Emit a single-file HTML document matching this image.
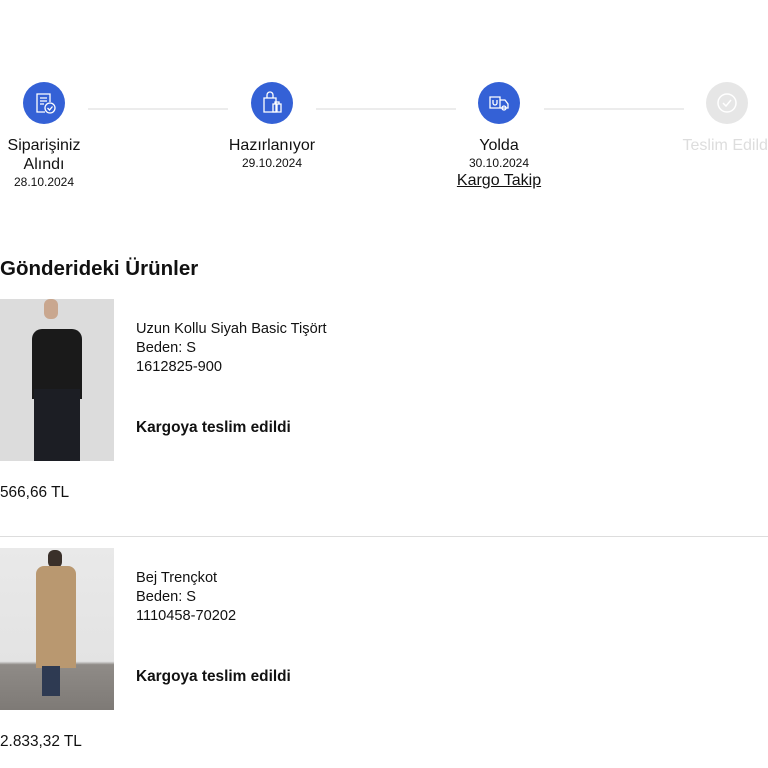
<!DOCTYPE html>
<html><head><meta charset="utf-8"><style>
*{margin:0;padding:0;box-sizing:border-box}
body{width:768px;height:768px;overflow:hidden;background:#fff;font-family:"Liberation Sans",sans-serif;color:#111;position:relative}
.a{position:absolute}
.c{position:absolute;width:42px;height:42px;border-radius:50%;background:#3461d6;top:82px}
.ln{position:absolute;top:108px;height:2px;background:#ececec}
.lab{position:absolute;text-align:center;font-size:16px;line-height:19px;width:160px}
.dt{font-size:12px;line-height:16px}
.t{font-size:14.6px;line-height:19px}
</style></head><body>
<div class="ln" style="left:88px;width:140px"></div>
<div class="ln" style="left:316px;width:140px"></div>
<div class="ln" style="left:544px;width:140px"></div>
<div class="c" style="left:23px"><svg width="42" height="42" viewBox="0 0 42 42" fill="none" stroke="#fff" stroke-width="1.3"><path d="M27 20V12H14v18h8"/><path d="M17 16h7M17 19h7M17 22h4"/><circle cx="27" cy="26" r="5"/><path d="M24.5 26l2 2 3-3.5"/></svg></div>
<div class="c" style="left:251px"><svg width="42" height="42" viewBox="0 0 42 42" fill="none" stroke="#fff" stroke-width="1.3"><path d="M13 16h12v14H13z"/><path d="M16 16v-3a3 3 0 016 0v3"/><path d="M22 22h8v8h-8z"/><path d="M24 22v-2h4v2M26 22v8"/></svg></div>
<div class="c" style="left:478px"><svg width="42" height="42" viewBox="0 0 42 42" fill="none" stroke="#fff" stroke-width="1.3"><path d="M12 15h10v11H12z"/><path d="M15 18v3a2 2 0 004 0v-3"/><path d="M22 18h5l3 4v4h-8"/><circle cx="26" cy="26" r="2"/></svg></div>
<div class="c" style="left:706px;background:#e6e6e6"><svg width="42" height="42" viewBox="0 0 42 42" fill="none" stroke="#fff" stroke-width="1.5"><circle cx="21" cy="21" r="9"/><path d="M17 21l3 3 5-6"/></svg></div>
<div class="lab" style="left:-36px;top:136px">Siparişiniz<br>Alındı<div class="dt">28.10.2024</div></div>
<div class="lab" style="left:192px;top:136px">Hazırlanıyor<div class="dt">29.10.2024</div></div>
<div class="lab" style="left:419px;top:136px">Yolda<div class="dt">30.10.2024</div><u>Kargo Takip</u></div>
<div class="lab" style="left:647px;top:136px;color:#ddd">Teslim Edildi</div>
<div class="a" style="left:0;top:257px;font-size:20.5px;font-weight:bold">Gönderideki Ürünler</div>

<div class="a" style="left:0;top:299px;width:114px;height:162px;background:#dcdcdc;overflow:hidden">
<div class="a" style="left:44px;top:0;width:14px;height:20px;border-radius:6px;background:#c9a78f"></div>
<div class="a" style="left:32px;top:30px;width:50px;height:70px;background:#1a1a1a;border-radius:10px 10px 0 0"></div>
<div class="a" style="left:34px;top:90px;width:46px;height:72px;background:#1c1e24"></div>
</div>
<div class="a t" style="left:136px;top:320px">Uzun Kollu Siyah Basic Tişört<br>Beden: S<br>1612825-900</div>
<div class="a t" style="left:136px;top:418px;font-weight:bold;font-size:15.4px">Kargoya teslim edildi</div>
<div class="a t" style="left:0;top:483px;font-size:15.4px">566,66 TL</div>
<div class="a" style="left:0;top:536px;width:768px;height:1px;background:#ddd"></div>

<div class="a" style="left:0;top:548px;width:114px;height:162px;background:linear-gradient(#e9e9e9 0,#e3e3e3 70%,#8f8b87 72%,#7e7a76 100%);overflow:hidden">
<div class="a" style="left:48px;top:2px;width:14px;height:18px;border-radius:6px;background:#3a302a"></div>
<div class="a" style="left:36px;top:18px;width:40px;height:102px;background:#b99870;border-radius:8px 8px 0 0"></div>
<div class="a" style="left:42px;top:118px;width:18px;height:30px;background:#2e3a52"></div>
</div>
<div class="a t" style="left:136px;top:569px">Bej Trençkot<br>Beden: S<br>1110458-70202</div>
<div class="a t" style="left:136px;top:667px;font-weight:bold;font-size:15.4px">Kargoya teslim edildi</div>
<div class="a t" style="left:0;top:732px;font-size:15.4px">2.833,32 TL</div>
</body></html>
